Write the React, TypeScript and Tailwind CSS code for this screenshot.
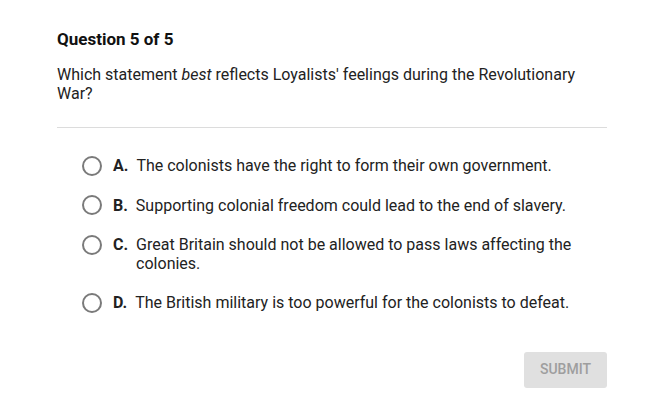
const options = [
  { letter: "A.", text: "The colonists have the right to form their own government." },
  { letter: "B.", text: "Supporting colonial freedom could lead to the end of slavery." },
  { letter: "C.", text: "Great Britain should not be allowed to pass laws affecting the colonies." },
  { letter: "D.", text: "The British military is too powerful for the colonists to defeat." },
];

export default function App() {
  return (
    <div className="min-h-[405px] w-[663px] bg-white font-['Roboto',sans-serif] text-[#222]">
      <div className="ml-[57px] w-[550px] pt-[27px]">
        <h1 className="text-[17px] font-bold leading-[24px] text-[#111]">Question 5 of 5</h1>
        <p className="mt-[14px] text-[16px] leading-[19px]">
          Which statement <em>best</em> reflects Loyalists' feelings during the Revolutionary War?
        </p>
        <div className="mt-[24px] h-px bg-[#dcdcdc]" />
        <div className="pt-[18px]">
          {options.map((o) => (
            <label key={o.letter} className="flex items-start py-[10px] pl-[25px] pr-[20px]">
              <span className="mt-[-0.5px] h-[20px] w-[20px] shrink-0 rounded-full border-2 border-[#7a7a7a]" />
              <span className="ml-[11px] flex flex-1 gap-[8px] text-[16px] leading-[19px]">
                <span className="shrink-0 font-bold">{o.letter}</span>
                <span>{o.text}</span>
              </span>
            </label>
          ))}
        </div>
        <div className="mt-[29px] flex justify-end">
          <button className="h-[36px] w-[83px] rounded-[3px] bg-[#e0e0e0] text-[14px] font-medium text-[#9e9e9e]">
            SUBMIT
          </button>
        </div>
      </div>
    </div>
  );
}
